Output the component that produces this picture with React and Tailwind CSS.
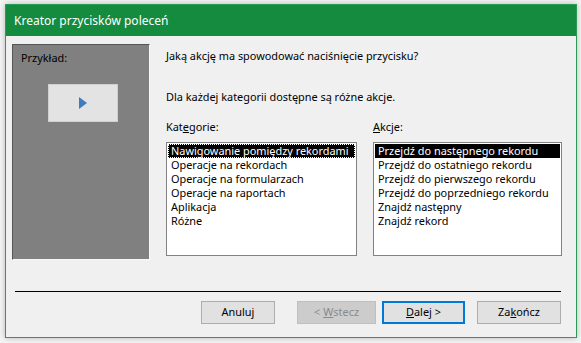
import React from "react";

const categories = [
  "Nawigowanie pomiędzy rekordami",
  "Operacje na rekordach",
  "Operacje na formularzach",
  "Operacje na raportach",
  "Aplikacja",
  "Różne",
];

const actions = [
  "Przejdź do następnego rekordu",
  "Przejdź do ostatniego rekordu",
  "Przejdź do pierwszego rekordu",
  "Przejdź do poprzedniego rekordu",
  "Znajdź następny",
  "Znajdź rekord",
];

function ListBox({ items, focused, className }) {
  return (
    <div className={"h-[114px] border border-[#828282] bg-white p-px " + className}>
      {items.map((item, i) => (
        <div
          key={item}
          className={
            "h-[14px] pl-[3px] leading-[14px] whitespace-nowrap " +
            (i === 0 ? "bg-black text-white " : "text-black ") +
            (i === 0 && focused ? "outline-1 outline-dotted outline-white -outline-offset-1" : "")
          }
        >
          {item}
        </div>
      ))}
    </div>
  );
}

function Button({ children, variant }) {
  let cls = "border border-[#adadad] bg-[#e1e1e1] text-black";
  if (variant === "disabled") cls = "border border-[#bfbfbf] bg-[#cccccc] text-[#8a8a8a]";
  if (variant === "default") cls = "border-2 border-[#0078d7] bg-[#e1e1e1] text-black";
  return (
    <div className={"flex h-[23px] items-center justify-center " + cls}>
      {children}
    </div>
  );
}

export default function App() {
  return (
    <div
      className="h-[343px] w-[581px] bg-[#f4f4f4] pl-[5px] pt-[4px] text-[10.9px] text-black"
      style={{ fontFamily: '"Noto Sans", "Open Sans", sans-serif' }}
    >
      <div className="flex h-[334px] w-[572px] flex-col border border-[#2a9a55] bg-[#f0f0f0] shadow-[0_0_6px_rgba(0,0,0,0.25)]">
        <div className="flex h-[31px] items-center bg-[#148b3e] pl-[8px] text-[12px] text-white">
          Kreator przycisków poleceń
        </div>

        <div className="flex pl-[6px] pt-[8px]">
          <div className="h-[216px] w-[138px] border-t border-l border-[#555555] border-r border-b border-r-[#f8f8f8] border-b-[#f8f8f8] bg-[#808080] pl-[8px] pt-[5px]">
            <div>Przykład:</div>
            <div className="ml-[27px] mt-[18px] flex h-[38px] w-[70px] items-center justify-center border border-[#d0d0d0] bg-[#e3e3e3]">
              <svg width="10" height="12" viewBox="0 0 10 12">
                <path d="M1 0 L9 6 L1 12 Z" fill="#3f7cbf" />
              </svg>
            </div>
          </div>

          <div className="ml-[16px] flex flex-col">
            <div className="mt-[4px] h-[16px] leading-[16px]">
              Jaką akcję ma spowodować naciśnięcie przycisku?
            </div>
            <div className="mt-[25px] h-[16px] leading-[16px]">
              Dla każdej kategorii dostępne są różne akcje.
            </div>
            <div className="mt-[14px] flex gap-[16px]">
              <div className="flex w-[191px] flex-col">
                <div className="h-[16px] leading-[16px]">
                  Kat<span className="underline">e</span>gorie:
                </div>
                <ListBox items={categories} focused className="mt-[7px]" />
              </div>
              <div className="flex w-[189px] flex-col">
                <div className="h-[16px] leading-[16px]">
                  <span className="underline">A</span>kcje:
                </div>
                <ListBox items={actions} className="mt-[7px]" />
              </div>
            </div>
          </div>
        </div>

        <div className="ml-[9px] mr-[15px] mt-[31px] h-px bg-black" />

        <div className="mr-[15px] mt-[9px] flex justify-end">
          <div className="w-[74px]">
            <Button>Anuluj</Button>
          </div>
          <div className="ml-[22px] w-[79px]">
            <Button variant="disabled">
              &lt; <span className="ml-[3px] underline">W</span>stecz
            </Button>
          </div>
          <div className="ml-[6px] w-[83px]">
            <Button variant="default">
              <span className="underline">D</span>alej &gt;
            </Button>
          </div>
          <div className="ml-[12px] w-[84px]">
            <Button>
              Za<span className="underline">k</span>ończ
            </Button>
          </div>
        </div>
      </div>
    </div>
  );
}
